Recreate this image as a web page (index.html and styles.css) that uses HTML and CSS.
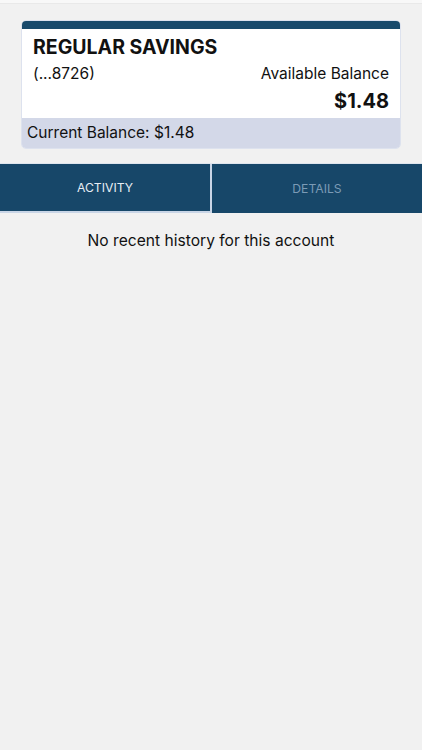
FILE: index.html
```html
<!DOCTYPE html>
<html lang="en">
<head>
  <meta charset="UTF-8">
  <meta name="viewport" content="width=device-width, initial-scale=1.0">
  <title>Regular Savings</title>
  <link rel="stylesheet" href="styles.css">
</head>
<body>
  <div class="status-strip"></div>

  <section class="account-card">
    <div class="account-card-bar"></div>
    <div class="account-card-body">
      <h1 class="account-name">REGULAR SAVINGS</h1>
      <div class="account-row">
        <span>(...8726)</span>
        <span>Available Balance</span>
      </div>
      <div class="account-amount">$1.48</div>
    </div>
    <div class="account-card-footer">Current Balance: $1.48</div>
  </section>

  <nav class="tabs">
    <button class="tab tab-active">ACTIVITY</button>
    <button class="tab">DETAILS</button>
  </nav>

  <main class="history">
    <p class="empty-note">No recent history for this account</p>
  </main>
</body>
</html>
```

FILE: styles.css
```css
body {
  font-family: Inter, "Liberation Sans", Arial, sans-serif;
  margin: 0;
  padding: 0;
  background-color: #f1f1f1;
  color: #111;
  min-height: 750px;
}
.status-strip {
  height: 3px;
  background: #f8f8f8;
  border-bottom: 1px solid #e9e9e9;
}
/* Account summary card */
.account-card {
  margin: 16px 21px 0 21px;
  border: 1px solid #dde2ee;
  border-radius: 5px;
  overflow: hidden;
  background: #fff;
}
.account-card-bar {
  height: 8px;
  background: #184a6c;
}
.account-card-body {
  padding: 6px 11px 4px 11px;
}
.account-name {
  margin: 0;
  font-size: 19.5px;
  font-weight: bold;
  line-height: 24px;
}
.account-row {
  display: flex;
  justify-content: space-between;
  font-size: 15.5px;
  line-height: 20px;
  margin-top: 5px;
}
.account-amount {
  text-align: right;
  font-size: 20px;
  font-weight: bold;
  line-height: 26px;
  margin-top: 4px;
}
.account-card-footer {
  background: #d3d8e8;
  padding: 5px 5px;
  font-size: 15.5px;
  line-height: 20px;
}
/* Tabs: the selected one sits on a thin light line */
.tabs {
  display: flex;
  gap: 2px;
  margin-top: 14px;
  background: #c9d5e6;
  border-top: 1px solid #dfe5ee;
}
.tab {
  flex: 1;
  border: none;
  padding: 0;
  font-family: inherit;
  font-size: 12.2px;
  background: #174769;
  color: #7b9bb6;
}
.tab-active {
  height: 47px;
  color: #e6edf4;
  margin-bottom: 2px;
}
.history {
  text-align: center;
}
.empty-note {
  margin: 18px 0 0 0;
  font-size: 15.6px;
  line-height: 20px;
}
```
